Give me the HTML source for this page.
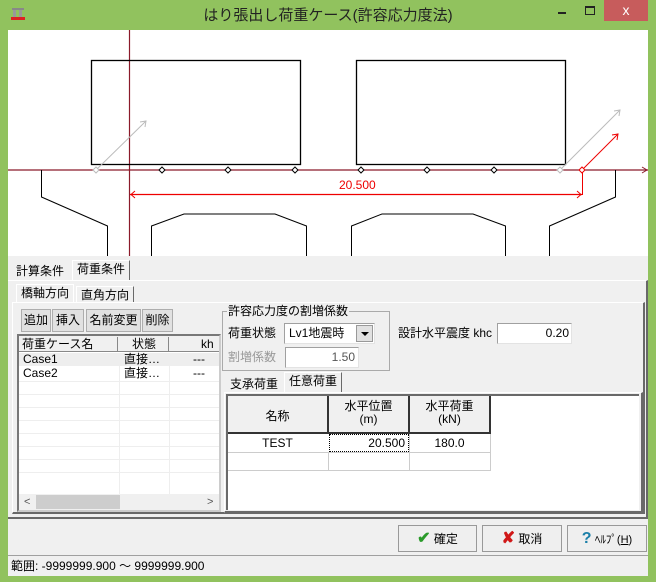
<!DOCTYPE html>
<html><head><meta charset="utf-8"><style>
*{box-sizing:border-box;margin:0;padding:0}
body{width:656px;height:582px;background:#91c25e;position:relative;overflow:hidden;font-family:"Liberation Sans","Noto Sans CJK JP",sans-serif;font-size:12px;color:#000}
.a{position:absolute}
.t{white-space:nowrap}
.btn{position:absolute;background:#e1e1e1;border:1px solid #adadad;text-align:center;line-height:20px;font-size:12px}
.sunk{position:absolute;background:#fff;border-top:1px solid #a0a0a0;border-left:1px solid #a0a0a0;border-bottom:1px solid #e3e3e3;border-right:1px solid #e3e3e3}
.tab{position:absolute;border:1px solid #fff;border-right:1px solid #696969;border-bottom:none;padding:0 4px;line-height:17px;font-size:12px}
</style></head><body>
<!-- title -->
<div class="a" style="left:10px;top:6px;width:16px;height:16px">
<svg width="16" height="16"><rect x="2" y="2" width="12" height="2" fill="#888"/><rect x="3" y="4" width="3" height="7" fill="#999"/><rect x="9" y="4" width="3" height="7" fill="#999"/><rect x="1" y="11" width="14" height="3" fill="#d22"/></svg></div>
<div class="a t" style="left:0;width:656px;top:4px;text-align:center;font-size:15px;color:#222">はり張出し荷重ケース(許容応力度法)</div>
<div class="a" style="left:558px;top:12px;width:8px;height:2px;background:#222"></div>
<div class="a" style="left:585px;top:6px;width:10px;height:9px;border:1px solid #222;border-top:2px solid #222"></div>
<div class="a" style="left:604px;top:0;width:44px;height:21px;background:#c75c5c;color:#fff;text-align:center;font-size:14px;line-height:21px">x</div>
<!-- client -->
<div class="a" style="left:8px;top:30px;width:640px;height:546px;background:#f0f0f0"></div>
<svg class="a" style="left:8px;top:30px" width="640" height="226">
<rect width="640" height="226" fill="#fff"/>
<g transform="translate(-8,-30)" fill="none">
<line x1="8" y1="170" x2="648" y2="170" stroke="#8b1a2a" stroke-width="1.2"/>
<path d="M642 167 L647 170 L642 173" stroke="#8b1a2a"/>
<line x1="129.5" y1="30" x2="129.5" y2="256" stroke="#8b1a2a" stroke-width="1.2"/>
<rect x="91.5" y="60.5" width="209" height="104" stroke="#000" stroke-width="1.3"/>
<rect x="356.5" y="60.5" width="209" height="104" stroke="#000" stroke-width="1.3"/>
<path d="M41.5 170 V197 L107.5 226 V256" stroke="#000"/>
<path d="M151.5 256 V226 L184 214 H275 L306.5 226 V256" stroke="#000"/>
<path d="M351.5 256 V226 L382 214 H473 L505.5 226 V256" stroke="#000"/>
<path d="M549.5 256 V226 L615.5 197 V170" stroke="#000"/>
<line x1="96" y1="170" x2="146" y2="121" stroke="#bbb"/><path d="M140 122 L146 121 L145 127" stroke="#bbb"/>
<line x1="560" y1="170" x2="620" y2="110" stroke="#bbb"/><path d="M614 111 L620 110 L619 116" stroke="#bbb"/>
<line x1="582" y1="170" x2="618" y2="134" stroke="#e00"/><path d="M612 135 L618 134 L617 140" stroke="#e00"/>
<line x1="130" y1="194.5" x2="582" y2="194.5" stroke="#e00" stroke-width="1.2"/>
<line x1="582.5" y1="170" x2="582.5" y2="195" stroke="#e00"/>
<path d="M135 191 L131 194.5 L135 198" stroke="#e00"/><path d="M577 191 L581 194.5 L577 198" stroke="#e00"/>
<g stroke="#000" fill="#fff"><path d="M162 167 l3 3 l-3 3 l-3 -3z"/><path d="M228 167 l3 3 l-3 3 l-3 -3z"/><path d="M295 167 l3 3 l-3 3 l-3 -3z"/><path d="M361 167 l3 3 l-3 3 l-3 -3z"/><path d="M427 167 l3 3 l-3 3 l-3 -3z"/><path d="M494 167 l3 3 l-3 3 l-3 -3z"/></g>
<g stroke="#bbb" fill="#fff"><path d="M96 167 l3 3 l-3 3 l-3 -3z"/><path d="M560 167 l3 3 l-3 3 l-3 -3z"/></g>
<path d="M582 167 l3 3 l-3 3 l-3 -3z" stroke="#e00" fill="#fff"/>
<text x="339" y="189" fill="#e00" font-size="12" font-family="Liberation Sans">20.500</text>
</g></svg>
<!-- outer tabs -->
<div class="a t" style="left:16px;top:263px;line-height:16px">計算条件</div>
<div class="tab t" style="left:72px;top:260px;height:21px;background:#f0f0f0">荷重条件</div>
<div class="a" style="left:8px;top:280px;width:640px;height:239px;border-top:1px solid #fff;border-bottom:2px solid #696969;border-right:2px solid #696969"></div>
<!-- inner tabs -->
<div class="tab t" style="left:16px;top:284px;height:19px;border-right:1px solid #fff">橋軸方向</div>
<div class="tab t" style="left:76px;top:286px;height:17px">直角方向</div>
<div class="a" style="left:12px;top:302px;width:633px;height:212px;border-top:1px solid #fff;border-left:1px solid #fff;border-bottom:2px solid #696969;border-right:2px solid #696969"></div>
<div class="btn" style="left:21px;top:309px;width:30px;height:23px">追加</div>
<div class="btn" style="left:52px;top:309px;width:32px;height:23px">挿入</div>
<div class="btn" style="left:86px;top:309px;width:55px;height:23px">名前変更</div>
<div class="btn" style="left:142px;top:309px;width:31px;height:23px">削除</div>
<!-- list -->
<div class="sunk" style="left:17px;top:334px;width:204px;height:178px;border:2px inset #ccc"></div>
<div class="a" style="left:19px;top:336px;width:200px;height:16px;background:#f0f0f0;border-bottom:1px solid #888"></div>
<div class="a t" style="left:22px;top:336px;line-height:16px">荷重ケース名</div>
<div class="a" style="left:117px;top:337px;width:1px;height:14px;background:#888"></div>
<div class="a t" style="left:132px;top:336px;line-height:16px">状態</div>
<div class="a" style="left:168px;top:337px;width:1px;height:14px;background:#888"></div>
<div class="a t" style="left:201px;top:336px;line-height:16px">kh</div>
<div class="a" style="left:19px;top:353px;width:200px;height:13px;background:#eee"></div>
<div class="a t" style="left:23px;top:352px;line-height:14px">Case1</div>
<div class="a t" style="left:124px;top:352px;line-height:14px">直接…</div>
<div class="a t" style="left:193px;top:352px;line-height:14px">---</div>
<div class="a t" style="left:23px;top:366px;line-height:14px">Case2</div>
<div class="a t" style="left:124px;top:366px;line-height:14px">直接…</div>
<div class="a t" style="left:193px;top:366px;line-height:14px">---</div>
<div class="a" style="left:119px;top:366px;width:1px;height:128px;background:#eee"></div>
<div class="a" style="left:169px;top:366px;width:1px;height:128px;background:#eee"></div>
<div class="a" style="left:19px;top:381px;width:200px;height:0;border-top:1px solid #eee;box-shadow:0 13px 0 #eee,0 26px 0 #eee,0 39px 0 #eee,0 52px 0 #eee,0 65px 0 #eee,0 78px 0 #eee,0 91px 0 #eee"></div>
<div class="a" style="left:19px;top:494px;width:200px;height:16px;background:#f0f0f0"></div>
<div class="a" style="left:36px;top:495px;width:84px;height:14px;background:#cdcdcd"></div>
<div class="a t" style="left:24px;top:494px;line-height:16px;color:#555;font-size:11px">&lt;</div>
<div class="a t" style="left:207px;top:494px;line-height:16px;color:#555;font-size:11px">&gt;</div>
<!-- group -->
<div class="a" style="left:222px;top:311px;width:168px;height:60px;border:1px solid #aaa"></div>
<div class="a t" style="left:227px;top:304px;background:#f0f0f0;padding:0 1px;line-height:14px">許容応力度の割増係数</div>
<div class="a t" style="left:228px;top:325px;line-height:16px">荷重状態</div>
<div class="sunk" style="left:284px;top:323px;width:91px;height:21px"></div>
<div class="a t" style="left:289px;top:325px;line-height:16px">Lv1地震時</div>
<div class="a" style="left:356px;top:325px;width:17px;height:17px;background:#e1e1e1;border:1px solid #999"></div>
<div class="a" style="left:361px;top:332px;border-left:4px solid transparent;border-right:4px solid transparent;border-top:4px solid #000"></div>
<div class="a t" style="left:228px;top:349px;line-height:16px;color:#999">割増係数</div>
<div class="sunk" style="left:285px;top:347px;width:74px;height:21px"></div>
<div class="a t" style="left:285px;top:349px;width:70px;text-align:right;line-height:16px;color:#555">1.50</div>
<div class="a t" style="left:398px;top:325px;line-height:16px">設計水平震度 khc</div>
<div class="sunk" style="left:497px;top:323px;width:75px;height:21px"></div>
<div class="a t" style="left:497px;top:325px;width:72px;text-align:right;line-height:16px">0.20</div>
<!-- inner tabs 2 -->
<div class="a t" style="left:230px;top:376px;line-height:16px">支承荷重</div>
<div class="tab t" style="left:284px;top:372px;height:21px;background:#f0f0f0">任意荷重</div>
<div class="a" style="left:224px;top:392px;width:419px;height:121px;border-top:1px solid #fff;border-left:1px solid #fff;border-bottom:2px solid #696969;border-right:2px solid #696969"></div>
<div class="a" style="left:226px;top:394px;width:413px;height:116px;background:#fff;border-top:2px solid #696969;border-left:2px solid #696969"></div>
<!-- grid -->
<div class="a" style="left:228px;top:396px;width:263px;height:38px;background:#f0f0f0;border-right:2px solid #333;border-bottom:2px solid #333"></div>
<div class="a" style="left:327px;top:396px;width:2px;height:38px;background:#333"></div>
<div class="a" style="left:408px;top:396px;width:2px;height:38px;background:#333"></div>
<div class="a t" style="left:228px;top:407px;width:99px;text-align:center">名称</div>
<div class="a t" style="left:329px;top:400px;width:79px;text-align:center;line-height:13px">水平位置<br>(m)</div>
<div class="a t" style="left:410px;top:400px;width:79px;text-align:center;line-height:13px">水平荷重<br>(kN)</div>
<div class="a" style="left:228px;top:452px;width:263px;height:19px;border-top:1px solid #ccc;border-bottom:1px solid #ccc;border-right:1px solid #ccc"></div>
<div class="a" style="left:490px;top:434px;width:1px;height:37px;background:#ccc"></div>
<div class="a" style="left:328px;top:452px;width:1px;height:19px;background:#ccc"></div>
<div class="a" style="left:409px;top:434px;width:1px;height:37px;background:#ccc"></div>
<div class="a" style="left:329px;top:434px;width:80px;height:18px;border:1px dotted #000"></div>
<div class="a t" style="left:228px;top:435px;width:99px;text-align:center;line-height:16px">TEST</div>
<div class="a t" style="left:329px;top:435px;width:76px;text-align:right;line-height:16px">20.500</div>
<div class="a t" style="left:410px;top:435px;width:79px;text-align:center;line-height:16px">180.0</div>
<!-- bottom buttons -->
<div class="btn" style="left:398px;top:525px;width:79px;height:27px;line-height:25px;background:#efefef;border:1px solid #999"><span style="color:#2a9a2a;font-weight:bold;font-size:16px">✔</span> 確定</div>
<div class="btn" style="left:482px;top:525px;width:80px;height:27px;line-height:25px;background:#efefef;border:1px solid #999"><span style="color:#d01818;font-weight:bold;font-size:16px">✘</span> 取消</div>
<div class="btn" style="left:567px;top:525px;width:80px;height:27px;line-height:25px;background:#efefef;border:1px solid #999"><span style="color:#1a7fa8;font-weight:bold;font-size:16px">?</span> <span style="font-size:11px">ﾍﾙﾌﾟ(<u>H</u>)</span></div>
<!-- status -->
<div class="a" style="left:8px;top:555px;width:640px;height:21px;border-top:1px solid #a0a0a0"></div>
<div class="a t" style="left:11px;top:558px;line-height:16px">範囲: -9999999.900 ～ 9999999.900</div>
</body></html>
